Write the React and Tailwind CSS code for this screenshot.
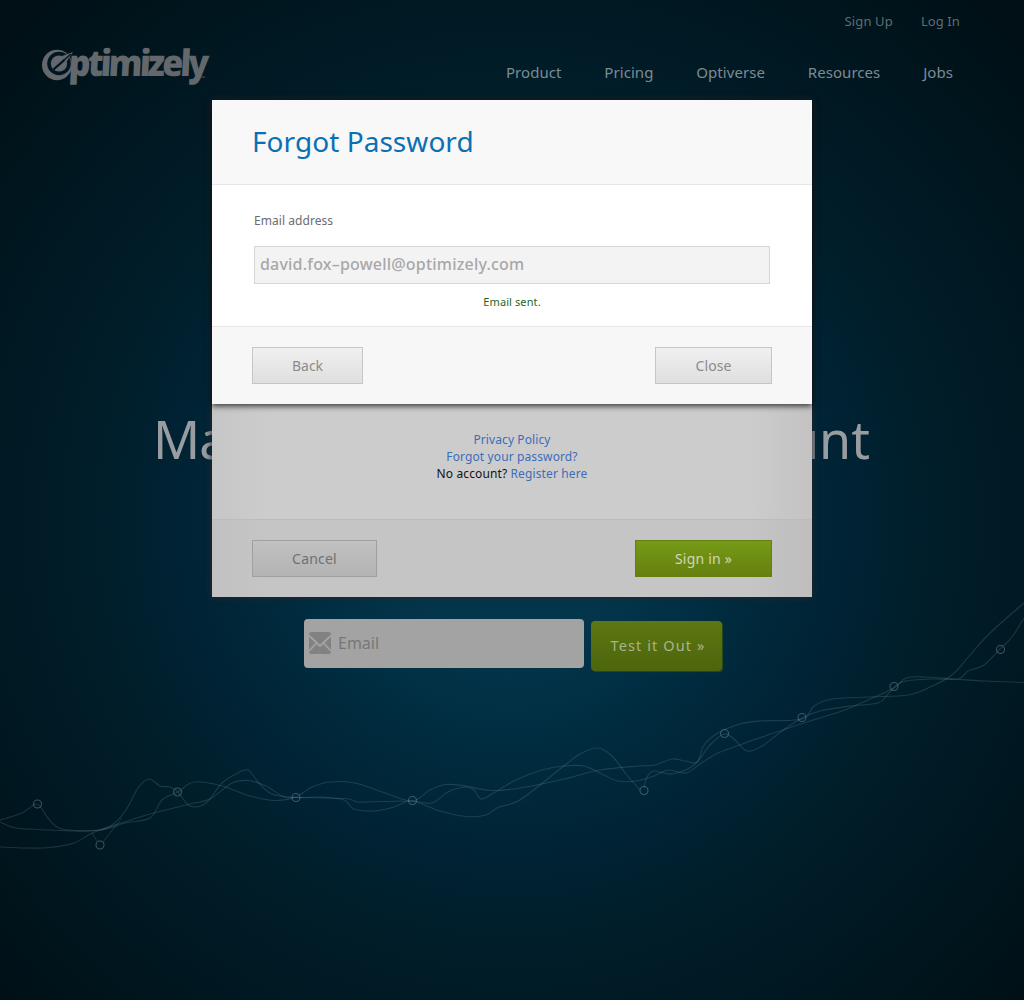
const navItems = ["Product", "Pricing", "Optiverse", "Resources", "Jobs"];

const nodes = [
  [37.5, 804], [100, 845], [177.5, 792], [296, 797.5], [412.5, 800.5], [644, 790.5],
  [724.5, 733.5], [802, 717.5], [894, 686.5], [1000.5, 649.5],
];

const series = [
  [[0, 820], [22, 813], [37, 804], [48, 818], [62, 829], [100, 830], [125, 823], [150, 818], [162, 800], [178, 792], [194, 782], [222, 786], [250, 796], [275, 800.5], [296, 797], [312, 787], [330, 782], [355, 783], [385, 793], [412, 801], [430, 790], [446, 784.5], [466, 786], [490, 790.5], [520, 788], [560, 780], [600, 770], [640, 766], [655, 765], [672, 759], [685, 761], [697, 762], [704, 745], [718, 733], [740, 724], [760, 721], [802, 719], [814, 706], [832, 699], [870, 697], [908, 695], [930, 687], [952, 675], [970, 655], [990, 633], [1024, 603]],
  [[0, 822], [16, 828], [50, 830], [92, 831], [118, 824], [150, 814], [190, 804], [210, 799], [232, 783], [248, 780.5], [266, 786], [284, 797], [296, 797.5], [345, 798.5], [358, 802], [385, 801.5], [412, 801], [432, 803], [448, 792], [466, 787], [474, 790], [481, 799], [492, 794], [516, 780], [542, 770], [564, 766], [584, 766], [600, 773], [618, 781], [636, 781], [654, 776], [668, 770], [686, 773], [700, 764], [718, 753], [745, 743], [780, 731], [810, 721], [842, 711], [870, 699], [894, 688], [906, 678], [925, 677], [954, 679], [985, 681], [1024, 682.5]],
  [[0, 847], [25, 848], [50, 847.5], [74, 843], [92, 833], [112, 825], [126, 810], [138, 788], [149, 779], [160, 786], [170, 787], [178, 792], [190, 806], [206, 803], [222, 783], [236, 774], [248, 770], [258, 782], [272, 794], [296, 797.5], [320, 797], [344, 800], [354, 809], [374, 811], [394, 807], [412, 801], [440, 811], [466, 816.5], [486, 815], [497, 808], [518, 801], [540, 785], [560, 769], [580, 754], [598, 748], [612, 756], [626, 774], [640, 790]],
  [[644, 788], [647, 777], [654, 771], [672, 774], [694, 765], [710, 745], [724, 734], [734, 739], [747, 751], [762, 746], [782, 731], [802, 718], [820, 711], [850, 706], [878, 703], [888, 694], [902, 682], [930, 679], [958, 679], [968, 671], [984, 665], [1000, 649], [1012, 637], [1024, 618]],
];

// Catmull-Rom spline through the points, written as cubic Bézier segments.
function smoothPath(points) {
  let d = `M${points[0][0]} ${points[0][1]}`;
  for (let i = 0; i < points.length - 1; i += 1) {
    const a = points[i - 1] ?? points[i];
    const b = points[i];
    const c = points[i + 1];
    const e = points[i + 2] ?? c;
    d += ` C${b[0] + (c[0] - a[0]) / 6} ${b[1] + (c[1] - a[1]) / 6} ${c[0] - (e[0] - b[0]) / 6} ${c[1] - (e[1] - b[1]) / 6} ${c[0]} ${c[1]}`;
  }
  return d;
}

function Logo() {
  return (
    <div className="relative flex h-[42px] w-[170px] items-start text-[#62686c]">
      <svg className="mt-[3px] h-[36px] w-[36px] shrink-0" viewBox="0 0 36 36" fill="none">
        <ellipse cx="17" cy="17" rx="15" ry="15.3" fill="currentColor" />
        <circle cx="19" cy="15.5" r="11.8" fill="#011620" />
        <ellipse cx="19" cy="15.5" rx="8.2" ry="8" fill="currentColor" />
        <path d="M13.5 21.5 L30 7" stroke="#011620" strokeWidth="2.2" />
        <path d="M22 8 L33 4 L26 14.5 Z" fill="currentColor" />
        <path d="M15 20 L31 6" stroke="#011620" strokeWidth="1.4" />
      </svg>
      <span className="absolute left-[29px] top-[-6px] w-[150px] origin-left whitespace-nowrap font-['Open_Sans'] text-[36.5px] font-extrabold leading-[46px] tracking-[-3.1px] [transform:skewX(-3deg)_scaleX(0.93)]">
        ptimizely
      </span>
      <span className="absolute left-[161px] top-[31px] text-[5px] leading-[5px]">™</span>
    </div>
  );
}

function EnvelopeIcon() {
  return (
    <svg className="h-[22px] w-[22px]" viewBox="0 0 22 22">
      <rect width="22" height="22" rx="2" fill="#828282" />
      <path d="M0 3.5 L11 14 L22 3.5 M0 19 L7.5 11 M22 19 L14.5 11" fill="none" stroke="#a3a3a3" strokeWidth="1.8" />
    </svg>
  );
}

function TrendLines() {
  return (
    <svg className="pointer-events-none absolute inset-0 h-[1000px] w-[1024px]" viewBox="0 0 1024 1000" fill="none">
      {series.map((points, i) => (
        <path key={i} d={smoothPath(points)} stroke="#6b96a6" strokeOpacity="0.24" strokeWidth="1.1" />
      ))}
      <path d="M92 833 L97 841 M103 842 Q113 829 122 818" stroke="#6b96a6" strokeOpacity="0.24" />
      {nodes.map(([x, y]) => (
        <circle key={x} cx={x} cy={y} r="4" stroke="#7595a2" strokeOpacity="0.48" strokeWidth="1.1" />
      ))}
    </svg>
  );
}

function SignInDialog() {
  return (
    <section className="absolute left-[212px] top-[100px] flex h-[497px] w-[600px] flex-col bg-[#cccccc] shadow-[0_0_7px_#26282b]">
      <div className="flex flex-1 flex-col items-center bg-[linear-gradient(90deg,#c6c6c6,#cccccc_9%,#cccccc_90%,#c4c2c2)] pt-[331px] text-[12px] leading-[17px]">
        <a className="tracking-[0.1px] text-[#3d6cb9]">Privacy Policy</a>
        <a className="tracking-[0.12px] text-[#3d6cb9]">Forgot your password?</a>
        <p className="tracking-[0.12px] text-[#111]">
          No account? <a className="text-[#3d6cb9]">Register here</a>
        </p>
      </div>
      <footer className="flex h-[78px] items-center justify-between border-t border-[#bcbcbc] bg-[linear-gradient(90deg,#c1c1c1,#c5c5c5_9%,#c5c5c5_90%,#bfbdbd)] px-10">
        <button className="h-[37px] w-[125px] border border-[#a0a0a0] bg-linear-to-b from-[#c1c1c1] to-[#b3b3b3] text-[14px] tracking-[0.2px] text-[#707070]">Cancel</button>
        <button className="h-[37px] w-[137px] border border-[#66800f] bg-linear-to-b from-[#769a16] to-[#668010] text-[14px] tracking-[0.2px] text-[#d0d6bb]">Sign in »</button>
      </footer>
    </section>
  );
}

function ForgotPasswordDialog() {
  return (
    <section className="absolute left-[212px] top-[100px] flex h-[304px] w-[600px] flex-col bg-white shadow-[0_2px_6px_rgba(0,0,0,0.75)]">
      <header className="h-[85px] border-b border-[#e6e6e6] bg-[#f8f8f8] px-10 pt-[22px]">
        <h2 className="whitespace-nowrap text-[28px] leading-[38px] tracking-[0.05px] text-[#0a70b4]">Forgot Password</h2>
      </header>
      <div className="flex flex-1 flex-col px-[42px] pt-[27px]">
        <label className="text-[12px] leading-[17px] tracking-[0.05px] text-[#6c6c6c]">Email address</label>
        <div className="mt-[17px] flex h-[38px] items-center border border-[#d6d6d6] bg-[#f3f3f3] px-[5px] text-[16px] font-medium tracking-[0.2px] text-[#a8a8a8]">
          <span className="-mt-[3px] whitespace-nowrap">david.fox–powell@optimizely.com</span>
        </div>
        <p className="mt-[10px] text-center text-[11px] leading-[16px] tracking-[0.1px] text-[#1f661f]">Email sent.</p>
      </div>
      <footer className="flex h-[78px] items-center justify-between border-t border-[#e6e6e6] bg-[#f7f7f7] px-10">
        <button className="h-[37px] w-[111px] border border-[#c6c6c6] bg-linear-to-b from-[#f0f0f0] to-[#dfdfdf] text-[14px] text-[#8b8b8b]">Back</button>
        <button className="h-[37px] w-[117px] border border-[#c6c6c6] bg-linear-to-b from-[#f0f0f0] to-[#dfdfdf] text-[14px] tracking-[0.1px] text-[#8b8b8b]">Close</button>
      </footer>
    </section>
  );
}

export default function App() {
  return (
    <main className="relative h-[1000px] w-[1024px] overflow-hidden bg-[radial-gradient(circle_at_512px_520px,#033a50_0px,#03344a_140px,#002a3d_250px,#002233_350px,#001e2a_420px,#001822_540px,#001016_700px)] font-['Noto_Sans',sans-serif]">
      <div className="flex h-[43px] items-center justify-end gap-[28px] pr-[64px] text-[13px] text-[#5f6d75]">
        <a className="tracking-[0.15px]">Sign Up</a>
        <a className="tracking-[0.1px]">Log In</a>
      </div>
      <header className="flex h-[49px] items-start justify-between pl-[40px] pr-[71px] pt-[2px]">
        <Logo />
        <nav className="flex gap-[42.9px] pt-[17px] text-[15px] leading-[21px] tracking-[0.05px] text-[#7c8b93]">
          {navItems.map((item) => (
            <a key={item}>{item}</a>
          ))}
        </nav>
      </header>
      <h1 className="mt-[311px] flex justify-between whitespace-nowrap pl-[153px] pr-[154px] text-[52px] leading-[72px] text-[#999da0]">
        <span className="tracking-[-1px]">Ma</span>
        <span>unt</span>
      </h1>
      <form className="mt-[144px] flex items-start justify-center gap-[7px] pl-[2px]">
        <div className="flex h-[49px] w-[280px] items-center gap-[7px] rounded-[4px] bg-[#a3a3a3] pb-[2px] pl-[5px] text-[16px] text-[#777]">
          <EnvelopeIcon />
          <span>Email</span>
        </div>
        <button className="mt-[2px] h-[50px] w-[131px] rounded-[4px] bg-linear-to-b from-[#5d7812] to-[#4d650c] pl-[3px] text-[14.5px] tracking-[1.1px] text-[#a9b38c] shadow-[1px_1px_1px_#2f4d16]">Test it Out »</button>
      </form>
      <TrendLines />
      <SignInDialog />
      <ForgotPasswordDialog />
    </main>
  );
}
